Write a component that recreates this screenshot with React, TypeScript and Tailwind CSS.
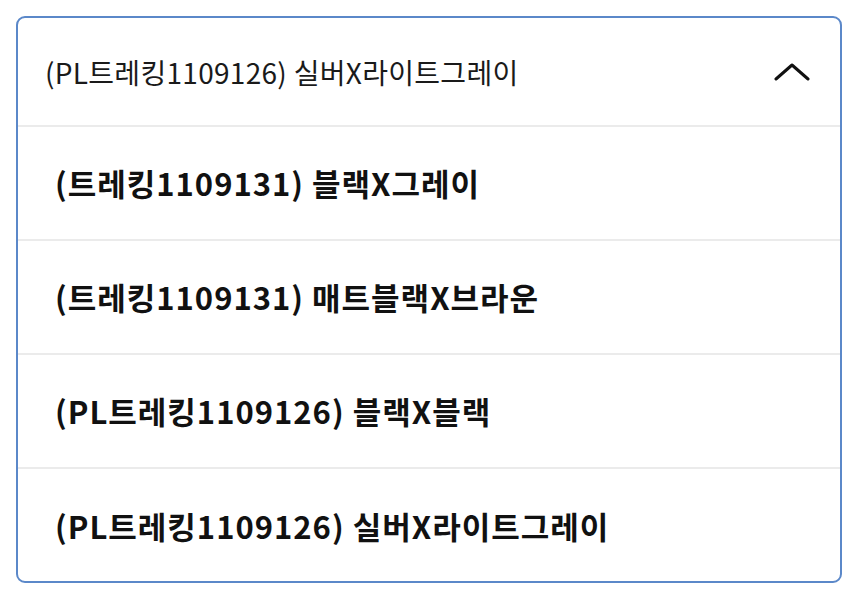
import React from 'react';

const options = [
  '(트레킹1109131) 블랙X그레이',
  '(트레킹1109131) 매트블랙X브라운',
  '(PL트레킹1109126) 블랙X블랙',
  '(PL트레킹1109126) 실버X라이트그레이',
];

const App: React.FC = () => {
  return (
    <div
      className="w-[850px] h-[592px] bg-white pt-[16px] px-[16px]"
      style={{ fontFamily: '"Noto Sans CJK KR", "Noto Sans", sans-serif' }}
    >
      <div className="w-[826px] h-[567px] border-2 border-[#5b88c9] rounded-[9px] flex flex-col overflow-hidden">
        <div className="h-[109px] flex items-center justify-between pl-[27px] pr-[30px] border-b-2 border-[#ebebeb] shrink-0">
          <span className="text-[28px] text-[#1a1a1a] tracking-[0.3px]">(PL트레킹1109126) 실버X라이트그레이</span>
          <svg width="36" height="20" viewBox="0 0 36 20" fill="none">
            <path d="M2 17 L18 3 L34 17" stroke="#111" strokeWidth="3" strokeLinecap="round" strokeLinejoin="round" />
          </svg>
        </div>
        {options.map((opt, i) => (
          <div
            key={opt}
            className={`h-[114px] flex items-center pl-[37px] shrink-0 ${i < options.length - 1 ? 'border-b-2 border-[#ebebeb]' : ''}`}
          >
            <span className="text-[31px] font-bold text-[#111] tracking-[1px]">{opt}</span>
          </div>
        ))}
      </div>
    </div>
  );
};

export default App;
